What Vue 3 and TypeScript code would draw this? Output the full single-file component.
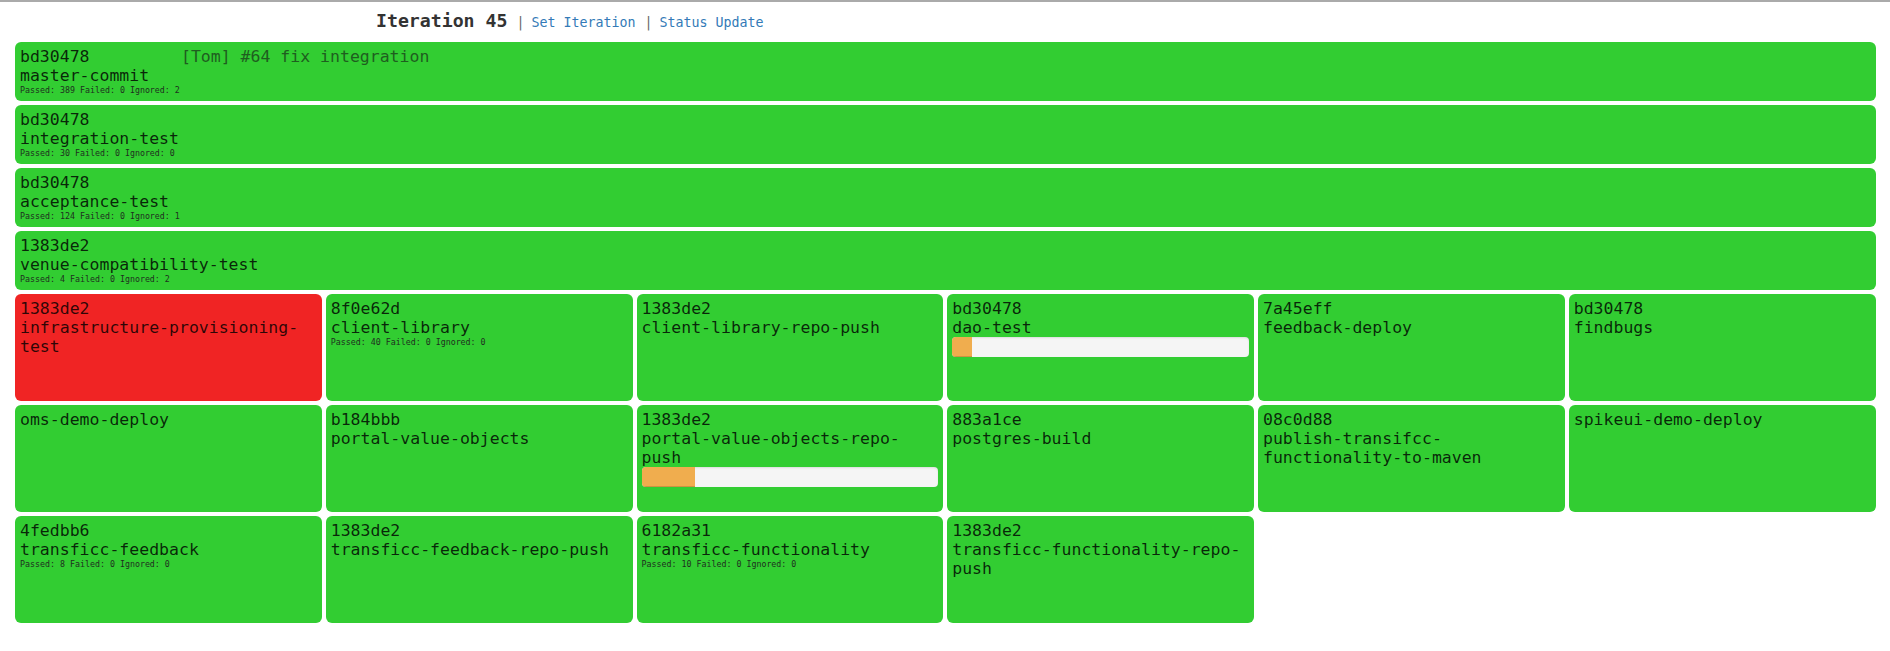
<script setup lang="ts">
interface Tile {
  rev?: string
  msg?: string
  name: string
  stats?: string
  progress?: number
  failed?: boolean
}

const wide: Tile[] = [
  { rev: 'bd30478', msg: '[Tom] #64 fix integration', name: 'master-commit', stats: 'Passed: 389 Failed: 0 Ignored: 2' },
  { rev: 'bd30478', name: 'integration-test', stats: 'Passed: 30 Failed: 0 Ignored: 0' },
  { rev: 'bd30478', name: 'acceptance-test', stats: 'Passed: 124 Failed: 0 Ignored: 1' },
  { rev: '1383de2', name: 'venue-compatibility-test', stats: 'Passed: 4 Failed: 0 Ignored: 2' },
]

const small: Tile[] = [
  { rev: '1383de2', name: 'infrastructure-provisioning-test', failed: true },
  { rev: '8f0e62d', name: 'client-library', stats: 'Passed: 40 Failed: 0 Ignored: 0' },
  { rev: '1383de2', name: 'client-library-repo-push' },
  { rev: 'bd30478', name: 'dao-test', progress: 6.5 },
  { rev: '7a45eff', name: 'feedback-deploy' },
  { rev: 'bd30478', name: 'findbugs' },
  { name: 'oms-demo-deploy' },
  { rev: 'b184bbb', name: 'portal-value-objects' },
  { rev: '1383de2', name: 'portal-value-objects-repo-push', progress: 18 },
  { rev: '883a1ce', name: 'postgres-build' },
  { rev: '08c0d88', name: 'publish-transifcc-functionality-to-maven' },
  { name: 'spikeui-demo-deploy' },
  { rev: '4fedbb6', name: 'transficc-feedback', stats: 'Passed: 8 Failed: 0 Ignored: 0' },
  { rev: '1383de2', name: 'transficc-feedback-repo-push' },
  { rev: '6182a31', name: 'transficc-functionality', stats: 'Passed: 10 Failed: 0 Ignored: 0' },
  { rev: '1383de2', name: 'transficc-functionality-repo-push' },
]
</script>

<template>
  <div class="page">
    <header class="head">
      <h1 class="title">Iteration 45</h1>
      <span class="sep">|</span>
      <a class="link" href="#">Set Iteration</a>
      <span class="sep">|</span>
      <a class="link" href="#">Status Update</a>
    </header>

    <section class="wide">
      <article v-for="t in wide" :key="t.name" class="tile">
        <div class="line">
          <span class="rev">{{ t.rev }}</span>
          <span v-if="t.msg" class="msg">{{ t.msg }}</span>
        </div>
        <div class="line">{{ t.name }}</div>
        <div v-if="t.stats" class="stats">{{ t.stats }}</div>
      </article>
    </section>

    <section class="grid">
      <article v-for="t in small" :key="t.name" class="tile" :class="{ failed: t.failed }">
        <div v-if="t.rev" class="line">{{ t.rev }}</div>
        <div class="line">{{ t.name }}</div>
        <div v-if="t.stats" class="stats">{{ t.stats }}</div>
        <div v-if="t.progress" class="progress">
          <div class="bar" :style="{ width: t.progress + '%' }"></div>
        </div>
      </article>
    </section>
  </div>
</template>

<style scoped>
.page {
  box-sizing: border-box;
  height: 651px;
  border-top: 2px solid #aaaaaa;
  padding: 0 14.5px 0 15px;
  font-family: "DejaVu Sans Mono", monospace;
  color: rgba(0, 0, 0, 0.82);
  background: #fff;
}

.head {
  height: 40px;
  box-sizing: border-box;
  padding: 9px 0 0 361px;
  display: flex;
  align-items: baseline;
  font-size: 13.3px;
  line-height: 20px;
}

.title {
  margin: 0 9px 0 0;
  font-size: 18.2px;
  font-weight: 700;
  line-height: 20px;
  color: #333;
}

.sep {
  color: #666;
  margin-right: 7px;
}

.link {
  color: #337ab7;
  text-decoration: none;
  margin-right: 9px;
}

.wide {
  display: flex;
  flex-direction: column;
  gap: 4px;
  margin-bottom: 4px;
}

.wide .tile {
  height: 59px;
}

.grid {
  display: grid;
  grid-template-columns: repeat(6, 1fr);
  grid-auto-rows: 107px;
  gap: 4px;
}

.tile {
  box-sizing: border-box;
  padding: 5px;
  background: #32cd32;
  border-radius: 6px;
  overflow: hidden;
}

.tile.failed {
  background: #f02424;
}

.line {
  font-size: 16.5px;
  line-height: 19px;
  overflow-wrap: break-word;
}

.rev {
  display: inline-block;
  width: 161px;
}

.msg {
  color: #1f5e1f;
}

.stats {
  font-size: 8.3px;
  line-height: 11px;
  color: #1f2f1f;
}

.progress {
  height: 20px;
  background: #f5f5f5;
  border-radius: 4px;
  overflow: hidden;
  box-shadow: inset 0 1px 2px rgba(0, 0, 0, 0.1);
}

.bar {
  height: 100%;
  background: #f0ad4e;
  box-shadow: inset 0 -1px 0 rgba(0, 0, 0, 0.15);
}
</style>
